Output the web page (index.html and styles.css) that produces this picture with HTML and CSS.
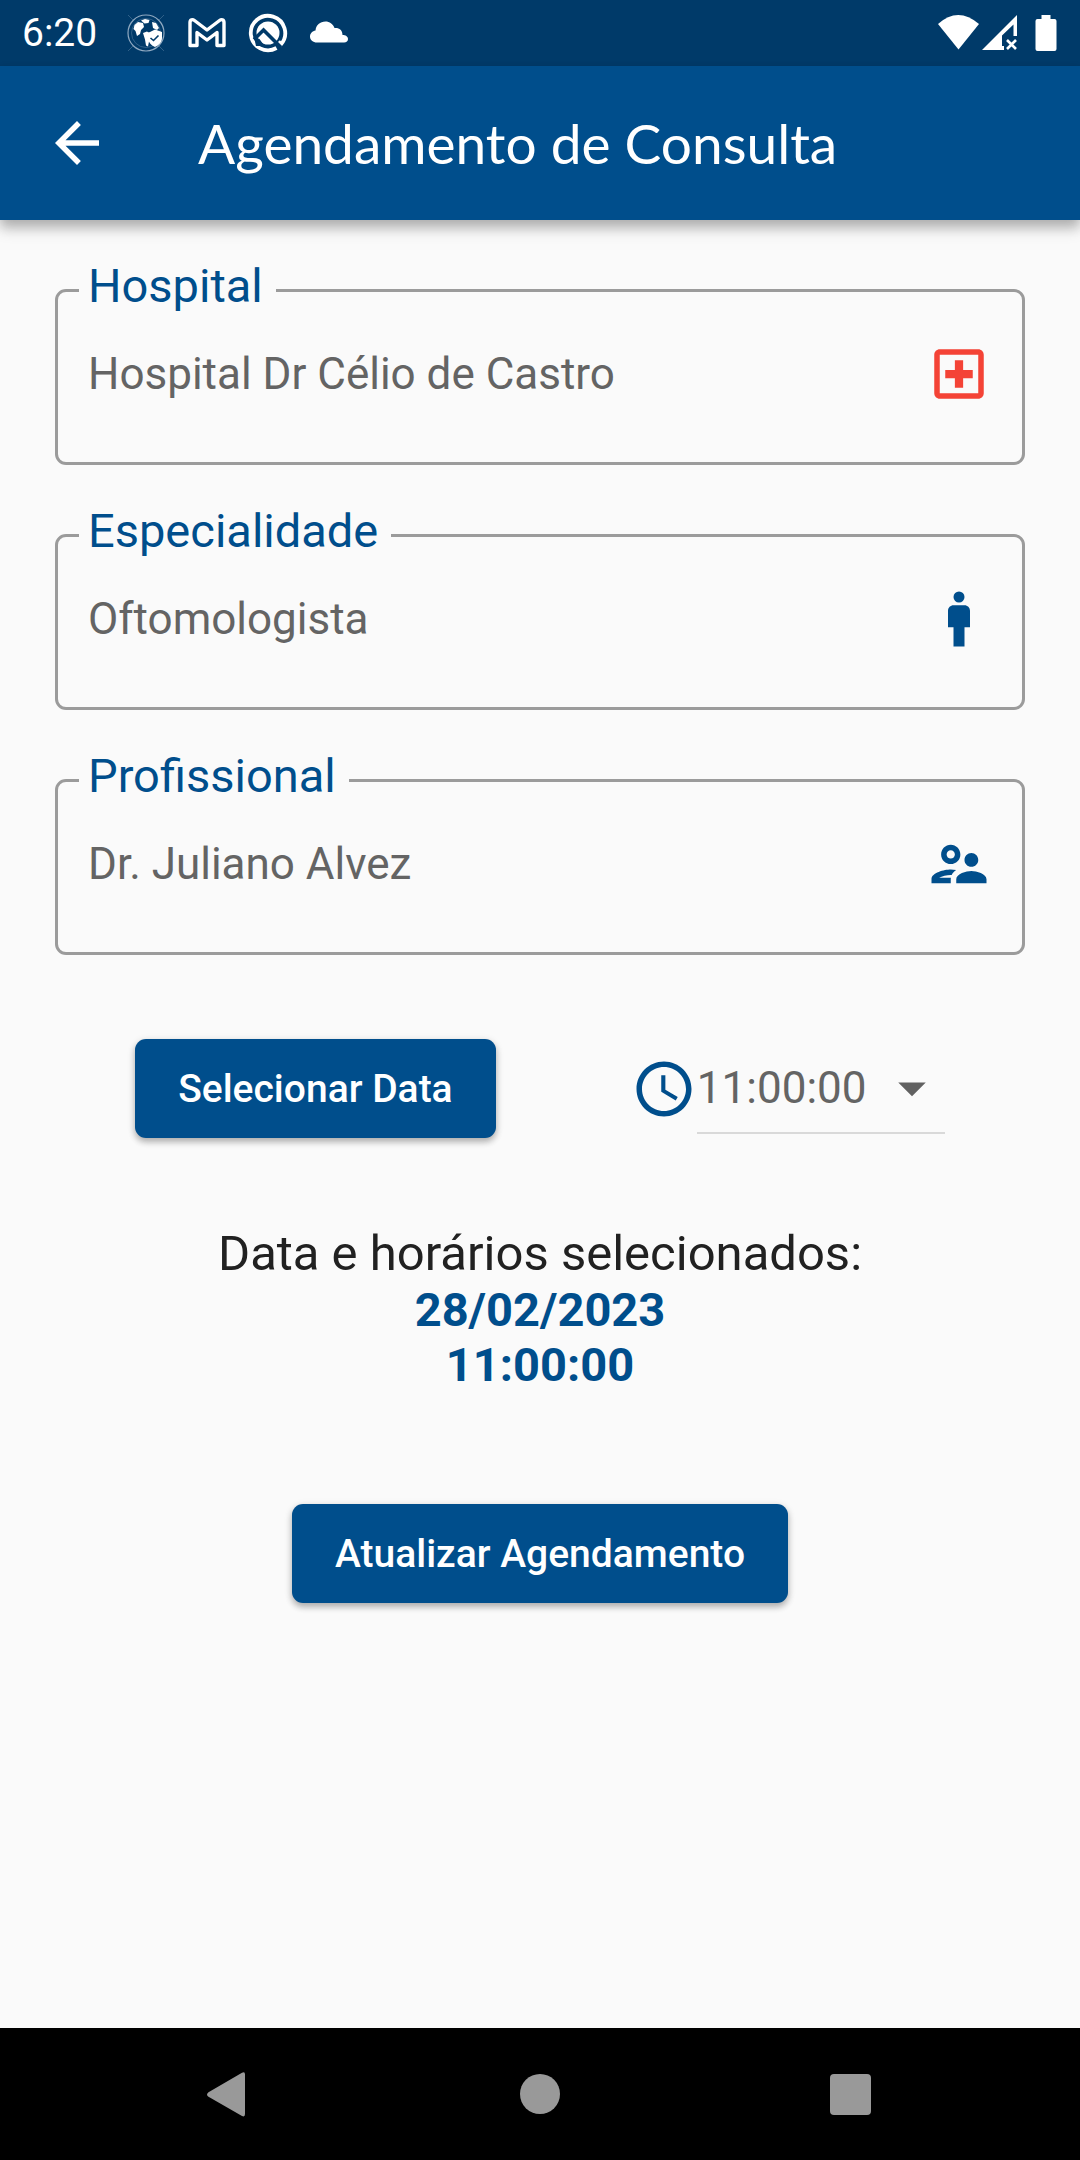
FILE: index.html
```html
<!DOCTYPE html>
<html lang="pt-BR">
<head>
  <meta charset="utf-8">
  <meta name="viewport" content="width=device-width, initial-scale=1">
  <title>Agendamento de Consulta</title>
  <link rel="stylesheet" href="styles.css">
</head>
<body>
  <div class="status-bar">
    <time class="status-time">6:20</time>
    <div class="status-icons">
      <svg class="status-icon" viewBox="0 0 44 44" aria-hidden="true">
        <g fill="none" stroke="#8fa9c1">
          <circle cx="22" cy="22" r="18" stroke-width="1.2"/>
          <circle cx="22" cy="22" r="14.5" stroke="#3c6a91" stroke-width=".8"/>
          <path d="M4 4l5 5M40 4l-5 5M4 40l5-5M40 40l-5-5" stroke="#3c6a91" stroke-width=".8"/>
        </g>
        <path fill="#fff" d="M10.500 14L14 11l5 1 1 4-3 3-1 4-3 2-1.500-5-2-2zM17 9.500l4-1.500 4.500 1-1 3-4 .5zM28 11l4 1 3 5-2 2-4-2zM19 22l4-1.500 3 2 1 6-2 2-1 5-2-1-1-6z"/>
        <path fill="#fff" d="M31 18.500l7 2.500v6c0 4-3 7.500-7 9-4-1.500-6.500-5-7-9l-1-5 3-1z"/>
        <path fill="none" stroke="#003a69" stroke-width="1.6" d="M26.500 27l3 2.500 5-5"/>
      </svg>
      <svg class="status-icon" viewBox="0 0 44 44" aria-hidden="true">
        <path fill="none" stroke="#fff" stroke-width="3.4" stroke-linejoin="round" d="M5 34.500V11.500C5 8.500 7.500 8 9.500 9.500L22 19 34.500 9.500C36.500 8 39 8.500 39 11.500V34.500H32V21.500L22 29 12 21.500V34.500Z"/>
      </svg>
      <svg class="status-icon" viewBox="0 0 44 44" aria-hidden="true">
        <path fill="none" stroke="#fff" stroke-width="3.800" d="M30.500 37A17.200 17.200 0 1 1 35 33.300L32.500 30.500"/>
        <circle cx="22" cy="22" r="11.500" fill="#fff"/>
        <path fill="none" stroke="#003a69" stroke-width="3.600" d="M8 28.500L17.500 19 35 36.500"/>
        <path fill="#003a69" d="M8 26l5.500 2 5 7H10z"/>
      </svg>
      <svg class="status-icon" viewBox="0 0 44 44" aria-hidden="true">
        <path fill="#fff" d="M10 31.500C6 31.500 3 29 3 25.500 3 22.500 5.500 20 8.500 19.500 9 14 13 10.500 18.500 10.500 22.500 10.500 26 13 27.500 17 32 16.500 35.500 19 35.500 24 38.500 24 41 25.500 41 28 41 30 39.500 31.500 37 31.500Z"/>
      </svg>
    </div>
    <div class="system-icons">
      <svg class="status-icon" viewBox="0 0 44 44" aria-hidden="true">
        <path fill="#fff" d="M2 13Q22 -5 43 13L22.500 38.500Z"/>
      </svg>
      <svg class="status-icon" viewBox="0 0 44 44" aria-hidden="true">
        <path fill="#fff" d="M2 39L37 4V25H33.500V13.500L22 24.500V35H24V39Z"/>
        <path fill="none" stroke="#fff" stroke-width="2.600" d="M27 29l9 9M36 29l-9 9"/>
      </svg>
      <svg class="status-icon" viewBox="0 0 44 44" aria-hidden="true">
        <path fill="#fff" d="M17.500 4h9v4h4q2 0 2 2v28q0 2-2 2h-17q-2 0-2-2V10q0-2 2-2h4z"/>
      </svg>
    </div>
  </div>

  <header class="app-bar">
    <button class="back-button" type="button" aria-label="Voltar">
      <svg class="icon" viewBox="0 0 24 24" aria-hidden="true"><path fill="currentColor" d="M20 11H7.830l5.590-5.590L12 4l-8 8 8 8 1.410-1.410L7.830 13H20v-2z"/></svg>
    </button>
    <h1 class="app-title">Agendamento de Consulta</h1>
  </header>

  <main class="content">
    <form class="form">
      <div class="fields">
        <fieldset class="field">
          <legend class="field-legend"><label for="hospital">Hospital</label></legend>
          <div class="field-row">
            <input class="field-input" id="hospital" type="text" value="Hospital Dr Célio de Castro" readonly>
            <svg class="icon icon-red" viewBox="0 0 24 24" aria-hidden="true"><path fill="currentColor" fill-rule="evenodd" d="M5 3h14c1.100 0 2 .9 2 2v14c0 1.100-.9 2-2 2H5c-1.100 0-2-.9-2-2V5c0-1.100.9-2 2-2zM5 5v14h14V5zM10.500 7h3v3.500H17v3h-3.500V17h-3v-3.500H7v-3h3.500z"/></svg>
          </div>
        </fieldset>
        <fieldset class="field">
          <legend class="field-legend"><label for="especialidade">Especialidade</label></legend>
          <div class="field-row">
            <input class="field-input" id="especialidade" type="text" value="Oftomologista" readonly>
            <svg class="icon icon-blue" viewBox="0 0 24 24" aria-hidden="true"><circle cx="12" cy="4" r="2" fill="currentColor"/><path fill="currentColor" d="M14 7h-4c-1.100 0-2 .9-2 2v6h2v7h4v-7h2V9c0-1.100-.9-2-2-2z"/></svg>
          </div>
        </fieldset>
        <fieldset class="field">
          <legend class="field-legend"><label for="profissional">Profissional</label></legend>
          <div class="field-row">
            <input class="field-input" id="profissional" type="text" value="Dr. Juliano Alvez" readonly>
            <svg class="icon icon-blue" viewBox="0 0 24 24" aria-hidden="true"><path fill="currentColor" d="M16.500 13c1.380 0 2.500-1.120 2.500-2.500S17.880 8 16.500 8 14 9.120 14 10.500s1.120 2.500 2.500 2.500zM9 12c1.930 0 3.500-1.570 3.500-3.500S10.930 5 9 5 5.500 6.570 5.500 8.500 7.070 12 9 12zm0-5c.83 0 1.500.67 1.500 1.500S9.830 10 9 10s-1.500-.67-1.500-1.500S8.170 7 9 7zm.05 10H4.770c.99-.5 2.830-1 4.230-1 .11 0 .23.010.34.010.34-.73.930-1.330 1.640-1.810-.73-.13-1.420-.2-1.980-.2-2.340 0-7 1.170-7 3.500V19h7v-1.500c0-.17.020-.34.050-.5zm7.450-2.500c-1.840 0-5.500 1.010-5.500 3V19h11v-1.500c0-1.990-3.660-3-5.500-3z"/></svg>
          </div>
        </fieldset>
      </div>

      <div class="schedule">
        <button class="button" type="button">Selecionar Data</button>
        <div class="time-picker">
          <svg class="icon icon-blue" viewBox="0 0 24 24" aria-hidden="true"><path fill="currentColor" d="M11.990 2C6.470 2 2 6.480 2 12s4.470 10 9.990 10C17.520 22 22 17.520 22 12S17.520 2 11.990 2zM12 20c-4.420 0-8-3.580-8-8s3.580-8 8-8 8 3.580 8 8-3.580 8-8 8zm.5-13H11v6l5.250 3.150.75-1.230-4.500-2.670z"/></svg>
          <div class="select-box">
            <select class="time-select" aria-label="Horário">
              <option>11:00:00</option>
            </select>
            <svg class="select-arrow" viewBox="0 0 24 24" aria-hidden="true"><path fill="currentColor" d="M7 10l5 5 5-5z"/></svg>
          </div>
        </div>
      </div>

      <section class="summary">
        <h2 class="summary-title">Data e horários selecionados:</h2>
        <p class="summary-value">28/02/2023</p>
        <p class="summary-value">11:00:00</p>
      </section>

      <button class="button" type="submit">Atualizar Agendamento</button>
    </form>
  </main>

  <nav class="nav-bar" aria-label="Sistema">
    <button class="nav-button" type="button" aria-label="Voltar">
      <svg class="nav-icon" viewBox="0 0 48 48" aria-hidden="true"><path fill="#999" d="M3.500 22.200Q.5 24.500 3.500 26.800L37 46Q40 47.500 40 44V4.500Q40 1 37 2.800Z"/></svg>
    </button>
    <button class="nav-button" type="button" aria-label="Início">
      <svg class="nav-icon" viewBox="0 0 48 48" aria-hidden="true"><circle cx="24" cy="24" r="20" fill="#999"/></svg>
    </button>
    <button class="nav-button" type="button" aria-label="Recentes">
      <svg class="nav-icon" viewBox="0 0 48 48" aria-hidden="true"><rect x="3" y="4" width="41" height="41" rx="4" fill="#999"/></svg>
    </button>
  </nav>
</body>
</html>
```

FILE: styles.css
```css
:root {
  --primary: #004e8c;
  --primary-dark: #003a69;
  --surface: #fafafa;
  --muted: #646464;
  --outline: #9b9b9b;
}

* {
  box-sizing: border-box;
}

body {
  margin: 0;
  min-height: 100vh;
  display: flex;
  flex-direction: column;
  background: var(--surface);
  color: #212121;
  font-family: Roboto, "Liberation Sans", sans-serif;
  font-size: 44px;
}

button,
input,
select {
  font: inherit;
  margin: 0;
}

svg {
  display: block;
  flex: none;
}

/* Status bar */
.status-bar {
  display: flex;
  align-items: center;
  height: 66px;
  padding: 0 12px 0 22px;
  background: var(--primary-dark);
  color: #fff;
}

.status-time {
  width: 102px;
  font-size: 39px;
  line-height: 66px;
}

.status-icons {
  display: flex;
  gap: 17px;
}

.system-icons {
  display: flex;
  margin-left: auto;
}

.status-icon {
  width: 44px;
  height: 44px;
}

/* App bar */
.app-bar {
  display: flex;
  align-items: center;
  gap: 88px;
  height: 154px;
  padding: 0 44px;
  background: var(--primary);
  color: #fff;
  box-shadow: 0 6px 11px rgba(0, 0, 0, 0.2), 0 10px 14px rgba(0, 0, 0, 0.14);
}

.back-button {
  padding: 0;
  border: 0;
  background: none;
  color: inherit;
}

.app-title {
  margin: 0;
  font-family: Lato, sans-serif;
  font-size: 55px;
  font-weight: 400;
  line-height: 66px;
}

.icon {
  width: 66px;
  height: 66px;
}

.icon-red {
  color: #f44336;
}

.icon-blue {
  color: var(--primary);
}

/* Form */
.content {
  flex: 1;
  padding: 38px 0;
}

.form {
  display: flex;
  flex-direction: column;
  align-items: center;
}

.fields {
  display: flex;
  flex-direction: column;
  gap: 38px;
  align-self: stretch;
  padding: 0 55px;
}

.field {
  min-width: 0;
  margin: 0;
  padding: 19px 30px 55px 21px;
  border: 3px solid var(--outline);
  border-radius: 11px;
}

.field-legend {
  padding: 0 13px 8px 9px;
  color: var(--primary);
  font-size: 47px;
  line-height: 56px;
}

.field-row {
  display: flex;
  align-items: center;
  padding-left: 9px;
}

.field-input {
  flex: 1;
  min-width: 0;
  height: 66px;
  padding: 0;
  border: 0;
  background: none;
  color: var(--muted);
}

.button {
  height: 99px;
  padding: 0 43px;
  border: 0;
  border-radius: 11px;
  background: var(--primary);
  color: #fff;
  font-size: 39px;
  font-weight: 500;
  box-shadow: 0 4px 6px rgba(0, 0, 0, 0.24), 0 2px 8px rgba(0, 0, 0, 0.12);
}

.schedule {
  display: flex;
  justify-content: space-evenly;
  align-items: center;
  align-self: stretch;
  margin-top: 84px;
}

.time-picker {
  display: flex;
  align-items: center;
}

.select-box {
  display: grid;
  align-items: center;
  width: 248px;
  height: 90px;
  border-bottom: 2px solid #d9d9d9;
}

.time-select {
  grid-area: 1 / 1;
  width: 100%;
  height: 88px;
  padding: 0;
  border: 0;
  appearance: none;
  background: none;
  color: var(--muted);
}

.select-arrow {
  grid-area: 1 / 1;
  justify-self: end;
  width: 66px;
  height: 66px;
  color: #616161;
  pointer-events: none;
}

.summary {
  margin: 87px 0 112px;
  text-align: center;
}

.summary-title {
  margin: 0;
  font-size: 49px;
  font-weight: 400;
  line-height: 57px;
}

.summary-value {
  margin: 0;
  color: var(--primary);
  font-size: 47px;
  font-weight: 700;
  line-height: 55px;
}

/* System navigation */
.nav-bar {
  display: grid;
  grid-template-columns: repeat(3, 1fr);
  height: 132px;
  padding: 0 73px;
  background: #000;
}

.nav-button {
  display: grid;
  place-items: center;
  padding: 0;
  border: 0;
  background: none;
}

.nav-icon {
  width: 48px;
  height: 48px;
}
```
